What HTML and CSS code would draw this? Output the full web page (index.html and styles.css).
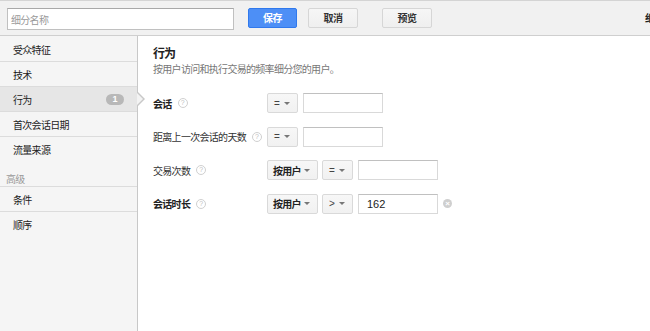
FILE: index.html
```html
<!DOCTYPE html>
<html lang="zh">
<head>
<meta charset="utf-8">
<link rel="stylesheet" href="styles.css">
</head>
<body>
<div class="topbar">
  <input class="name-input" type="text" placeholder="细分名称">
  <button class="btn btn-primary">保存</button>
  <button class="btn btn-cancel">取消</button>
  <button class="btn btn-preview">预览</button>
  <span class="right-text">细分</span>
</div>
<div class="layout">
  <aside class="sidebar">
    <ul class="nav">
      <li class="nav-item">受众特征</li>
      <li class="nav-item">技术</li>
      <li class="nav-item active">行为<span class="badge">1</span><span class="pointer"></span></li>
      <li class="nav-item">首次会话日期</li>
      <li class="nav-item last">流量来源</li>
    </ul>
    <div class="nav-header">高级</div>
    <ul class="nav">
      <li class="nav-item">条件</li>
      <li class="nav-item last">顺序</li>
    </ul>
  </aside>
  <main class="main">
    <h2 class="title">行为</h2>
    <p class="desc">按用户访问和执行交易的频率细分您的用户。</p>
    <div class="rows">
      <div class="row">
        <div class="label bold">会话<span class="help">?</span></div>
        <span class="sel sel-op">=<i class="caret"></i></span>
        <input class="val" type="text">
      </div>
      <div class="row">
        <div class="label">距离上一次会话的天数<span class="help">?</span></div>
        <span class="sel sel-op">=<i class="caret"></i></span>
        <input class="val" type="text">
      </div>
      <div class="row">
        <div class="label">交易次数<span class="help">?</span></div>
        <span class="sel sel-user">按用户<i class="caret"></i></span>
        <span class="sel sel-op">=<i class="caret"></i></span>
        <input class="val" type="text">
      </div>
      <div class="row">
        <div class="label bold">会话时长<span class="help">?</span></div>
        <span class="sel sel-user">按用户<i class="caret"></i></span>
        <span class="sel sel-op">&gt;<i class="caret"></i></span>
        <input class="val" type="text" value="162">
        <span class="clear">×</span>
      </div>
    </div>
  </main>
</div>
</body>
</html>
```
FILE: styles.css
```css
* { box-sizing: border-box; }
html, body { margin: 0; padding: 0; height: 100%; }
body {
  font-family: "Noto Sans CJK SC", sans-serif;
  font-size: 10px;
  letter-spacing: -0.7px;
  color: #222;
  background: #fff;
  display: flex;
  flex-direction: column;
  overflow: hidden;
}
.topbar {
  height: 36px;
  flex: none;
  background: #f1f1f1;
  border-top: 1px solid #d4d4d4;
  border-bottom: 1px solid #cfcfcf;
  display: flex;
  align-items: flex-start;
  padding: 7px 0 0 7px;
  overflow: hidden;
  white-space: nowrap;
}
.topbar > * { flex: none; }
.name-input {
  width: 227px;
  height: 22px;
  border: 1px solid #c0c0c0;
  border-top-color: #a8a8a8;
  background: #fff;
  padding: 0 3px;
  font: 10px "Noto Sans CJK SC", sans-serif;
  letter-spacing: -0.7px;
  color: #333;
  outline: none;
}
.name-input::placeholder { color: #999; }
.btn {
  height: 20px;
  border-radius: 2px;
  font: bold 10px "Noto Sans CJK SC", sans-serif;
  letter-spacing: -0.5px;
  line-height: 18px;
  padding: 0;
  text-align: center;
}
.btn-primary {
  width: 49px;
  margin-left: 14px;
  background: #4d8ff6;
  border: 1px solid #3079ed;
  color: #fff;
}
.btn-cancel, .btn-preview {
  width: 50px;
  background: linear-gradient(#f6f6f6, #efefef);
  border: 1px solid #d6d6d6;
  color: #333;
}
.btn-cancel { margin-left: 11px; }
.btn-preview { margin-left: 24px; }
.right-text {
  margin-left: 213px;
  font: bold 10px "Noto Sans CJK SC", sans-serif;
  line-height: 20px;
  color: #222;
}
.layout {
  flex: 1;
  display: flex;
  min-height: 0;
}
.sidebar {
  width: 138px;
  flex: none;
  background: #f5f5f5;
  border-right: 1px solid #c8c8c8;
  padding-top: 1px;
}
.nav { list-style: none; margin: 0; padding: 0; }
.nav-item {
  position: relative;
  height: 25px;
  padding-left: 13px;
  border-bottom: 1px solid #dcdcdc;
  font-size: 10px;
  color: #222;
  display: flex;
  align-items: center;
}
.nav-item.last { border-bottom: none; }
.nav-item.active { background: #e6e6e6; }
.badge {
  margin-left: auto;
  margin-right: 13px;
  width: 18px;
  height: 11px;
  border-radius: 6px;
  background: #b8b8b8;
  color: #fff;
  font: bold 9px/11px Arial, sans-serif;
  letter-spacing: 0;
  text-align: center;
}
.pointer {
  position: absolute;
  right: -8px;
  top: 5px;
  width: 0;
  height: 0;
  border-top: 7px solid transparent;
  border-bottom: 7px solid transparent;
  border-left: 7px solid #c8c8c8;
}
.pointer::after {
  content: "";
  position: absolute;
  left: -8px;
  top: -6px;
  border-top: 6px solid transparent;
  border-bottom: 6px solid transparent;
  border-left: 6px solid #f3f3f3;
}
.nav-header {
  height: 25px;
  padding: 10px 0 0 6px;
  color: #999;
  font-size: 10px;
  line-height: 14px;
  border-bottom: 1px solid #dcdcdc;
}
.main {
  flex: 1;
  padding: 9px 0 0 15px;
}
.title {
  margin: 0;
  font-size: 12px;
  letter-spacing: -1px;
  line-height: 16px;
  font-weight: bold;
  color: #222;
}
.desc {
  margin: 1px 0 0;
  font-size: 10px;
  line-height: 14px;
  color: #777;
}
.rows {
  margin-top: 17px;
  display: flex;
  flex-direction: column;
  gap: 13.5px;
}
.row {
  display: flex;
  align-items: center;
  height: 20px;
}
.label {
  width: 114px;
  flex: none;
  display: flex;
  align-items: center;
  font-size: 10px;
  color: #333;
  white-space: nowrap;
}
.label.bold { font-weight: bold; color: #222; }
.help {
  margin-left: 6px;
  width: 10px;
  height: 10px;
  border: 1px solid #d0d0d0;
  border-radius: 50%;
  color: #c0c0c0;
  font: 7px/8px Arial, sans-serif;
  letter-spacing: 0;
  text-align: center;
  font-weight: normal;
}
.sel {
  height: 20px;
  border: 1px solid #d9d9d9;
  border-radius: 2px;
  background: linear-gradient(#f7f7f7, #f1f1f1);
  display: inline-flex;
  align-items: center;
  justify-content: space-between;
  color: #444;
  margin-right: 4px;
  flex: none;
  white-space: nowrap;
}
.sel-op { width: 31px; padding: 0 7px 0 6px; font: 10px Arial, sans-serif; letter-spacing: 0; }
.sel-user { width: 51px; font-weight: bold; font-size: 10px; color: #222; padding: 0 7px 0 5px; }
.caret {
  width: 0;
  height: 0;
  border-left: 3px solid transparent;
  border-right: 3px solid transparent;
  border-top: 3px solid #777;
}
.val {
  width: 80px;
  height: 20px;
  border: 1px solid #d9d9d9;
  border-top-color: #c0c0c0;
  background: #fff;
  padding: 0 8px;
  font: 11px Arial, sans-serif;
  color: #222;
  margin-left: 1px;
  outline: none;
  flex: none;
}
.clear {
  margin-left: 5px;
  width: 9px;
  height: 9px;
  border-radius: 50%;
  background: #cfcfcf;
  color: #fff;
  font: bold 8px/9px Arial, sans-serif;
  letter-spacing: 0;
  text-align: center;
}
```
